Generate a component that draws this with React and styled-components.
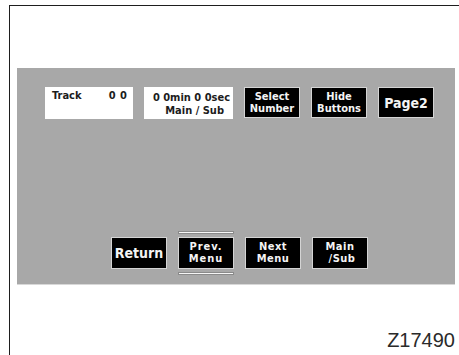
import React from 'react';
import styled, { createGlobalStyle } from 'styled-components';

const Global = createGlobalStyle`
  html, body {
    margin: 0;
    padding: 0;
    background: #ffffff;
  }
  body {
    width: 459px;
    height: 355px;
    overflow: hidden;
    font-family: "DejaVu Sans Condensed", "DejaVu Sans", sans-serif;
  }
`

const Page = styled.div`
  width: 459px;
  height: 355px;
  padding: 5px 0 0 9px;
  box-sizing: border-box;
`

const Frame = styled.div`
  height: 100%;
  border-top: 1px solid #1e1e1e;
  border-left: 1px solid #1e1e1e;
  box-sizing: border-box;
  padding: 62px 4px 0 7px;
  display: flex;
  flex-direction: column;
`

const Panel = styled.div`
  width: 438px;
  height: 217px;
  background: #a8a8a8;
  box-sizing: border-box;
  padding: 19px 0 0 28px;
  display: flex;
  flex-direction: column;
  border-bottom: 1px solid #d8d8d8;
`

const TopRow = styled.div`
  display: flex;
  gap: 11px;
  align-items: flex-start;
`

const InfoBox = styled.div`
  width: ${(p) => p.w}px;
  height: 32px;
  background: #ffffff;
  box-sizing: border-box;
  padding: 1px 3px 0 7px;
  color: #1c1c1c;
  font-weight: bold;
  font-size: 11px;
  line-height: 13px;
  display: flex;
  flex-direction: column;
`

const TrackLine = styled.div`
  display: flex;
  justify-content: space-between;
  padding-top: 1px;
  padding-right: 3px;
  word-spacing: 1px;
`

const InfoLine = styled.div`
  text-align: right;
  line-height: ${(p) => p.lh || 13}px;
  padding-top: ${(p) => p.top || 0}px;
  margin-right: ${(p) => p.mr || 0}px;
  white-space: nowrap;
`

const Button = styled.div`
  width: 56px;
  height: ${(p) => p.h || 32}px;
  background: #000000;
  border: 1px solid #d4d4d4;
  box-sizing: border-box;
  color: #f4f4f4;
  font-weight: bold;
  font-size: ${(p) => p.size || 11}px;
  line-height: 12px;
  letter-spacing: ${(p) => p.ls || 0}px;
  display: flex;
  flex-direction: column;
  align-items: center;
  justify-content: center;
  text-align: center;
  white-space: nowrap;
`

const BottomRow = styled.div`
  display: flex;
  gap: 11px;
  align-items: center;
  margin-top: 112px;
  padding-left: 66px;
`

const Selected = styled.div`
  display: flex;
  flex-direction: column;
  gap: 3px;
`

const SelectBar = styled.div`
  height: 3px;
  background: #f6f6f6;
  border: 1px solid #8a8a8a;
  box-sizing: border-box;
`

const Code = styled.div`
  margin-top: 45px;
  text-align: right;
  font-family: "Liberation Sans", Arial, sans-serif;
  font-size: 20px;
  line-height: 20px;
  color: #2a2a2a;
`

const App = () => {
  return (
    <Page>
      <Global />
      <Frame>
        <Panel>
          <TopRow>
            <InfoBox w={88}>
              <TrackLine>
                <span>Track</span>
                <span>0 0</span>
              </TrackLine>
            </InfoBox>
            <InfoBox w={89}>
              <InfoLine top={3}>0 0min 0 0sec</InfoLine>
              <InfoLine lh={14} mr={6}>Main / Sub</InfoLine>
            </InfoBox>
            <Button h={31}>
              <span>Select</span>
              <span>Number</span>
            </Button>
            <Button h={31}>
              <span>Hide</span>
              <span>Buttons</span>
            </Button>
            <Button h={31} size={14}>Page2</Button>
          </TopRow>
          <BottomRow>
            <Button size={14}>Return</Button>
            <Selected>
              <SelectBar />
              <Button ls={1}>
                <span>Prev.</span>
                <span>Menu</span>
              </Button>
              <SelectBar />
            </Selected>
            <Button ls={0.5}>
              <span>Next</span>
              <span>Menu</span>
            </Button>
            <Button ls={0.5}>
              <span>Main</span>
              <span>&nbsp;/Sub</span>
            </Button>
          </BottomRow>
        </Panel>
        <Code>Z17490</Code>
      </Frame>
    </Page>
  )
}

export default App
